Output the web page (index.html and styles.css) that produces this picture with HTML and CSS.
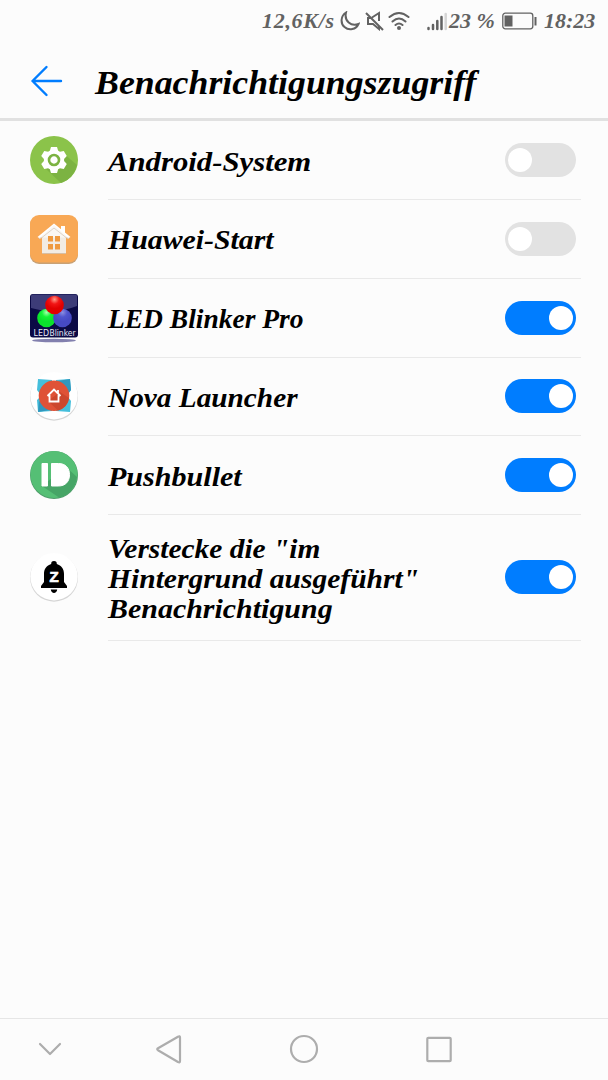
FILE: index.html
```html
<!DOCTYPE html>
<html lang="de">
<head>
  <meta charset="UTF-8" />
  <meta name="viewport" content="width=device-width, initial-scale=1.0" />
  <title>Benachrichtigungszugriff</title>
  <link rel="stylesheet" href="styles.css">
</head>
<body>
  <div class="screen">
    <div class="status-bar">
      <span class="speed">12,6K/s</span>
      <svg class="moon" width="20" height="20" viewBox="0 0 20 20"><path d="M6 1.500C.5 5 .3 12.500 4.500 16C9 20 16 18.500 18.500 13C11 16 4 10 6 1.500Z"/></svg>
      <svg class="mute" width="20" height="20" viewBox="0 0 20 20"><path d="M1 2L18 19M7 6.500L14 2V10M14 15V18L8 13H3V7H6"/></svg>
      <svg class="wifi" width="24" height="20" viewBox="0 0 24 20"><path d="M2.500 6Q12-2 21.500 6M5.500 10.500Q12 4.500 18.500 10.500M8.500 14Q12 11 15.500 14"/><circle cx="12" cy="17" r="2"/></svg>
      <svg class="signal" width="20" height="20" viewBox="0 0 20 20"><path d="M1.500 17V18M6 14V18M10.300 10V18M14.500 6V18"/><path class="weak" d="M18.700 3V18"/></svg>
      <span class="percent">23 %</span>
      <svg class="battery" width="36" height="18" viewBox="0 0 36 18"><rect x=".8" y="1.200" width="30" height="15.600" rx="2.500"/><path class="level" d="M2.500 3.500H10.500V14.500H2.500ZM32.500 5H34.500V13.500H32.500Z"/></svg>
      <span class="time">18:23</span>
    </div>

    <div class="header">
      <svg class="back" width="34" height="34" viewBox="0 0 34 34"><path d="M17.500 3L3.500 17L17.500 31M3.500 17H32"/></svg>
      <h1>Benachrichtigungszugriff</h1>
    </div>

    <div class="list">
      <div class="row">
        <svg class="icon" viewBox="0 0 48 48">
          <circle cx="24" cy="24" r="24" fill="#8bc34a"/>
          <path d="M33 17L47 29A24 24 0 0 1 31 47L16 33Z" fill="#7cb342"/>
          <g transform="translate(24 24)" fill="#fff">
            <circle r="10.200"/>
            <path id="tooth" d="M-4.500-8L-3-13H3L4.500-8V8L3 13H-3L-4.500 8Z"/>
            <use href="#tooth" transform="rotate(60)"/>
            <use href="#tooth" transform="rotate(120)"/>
            <circle r="5" fill="#fff" stroke="#7cb342" stroke-width="2.600"/>
          </g>
        </svg>
        <div class="body">
          <span class="label android">Android-System</span>
          <span class="switch"></span>
        </div>
      </div>

      <div class="row">
        <svg class="icon" viewBox="0 0 48 48">
          <rect y="1" width="48" height="48" rx="9" fill="#c9a174"/>
          <rect width="48" height="47.500" rx="9" fill="#f8a855"/>
          <path d="M12 23V39H36V23L24 11Z" fill="#f2ece4"/>
          <path d="M31 16V11H35V20M7.500 22L24 8.500L40.500 22L38 23.500L24 12.500L10 23.500Z" fill="#fff"/>
          <path d="M24 10L38 22.500H10Z" fill="#faf7f3"/>
          <path d="M9 23.500L12 22.500L24 13L36 22.500L39 23.500" fill="none" stroke="#ddd3c8"/>
          <path d="M18 21H23V26.500H18ZM25 21H30V26.500H25ZM18 29H23V34.500H18ZM25 29H30V34.500H25Z" fill="#ef9a40"/>
          <path d="M12 38.500H36" stroke="#d7bea3"/>
        </svg>
        <div class="body">
          <span class="label huawei">Huawei-Start</span>
          <span class="switch"></span>
        </div>
      </div>

      <div class="row">
        <svg class="icon" viewBox="0 0 48 48">
          <defs>
            <radialGradient id="red" cy=".2"><stop offset="0" stop-color="#ff9b8a"/><stop offset=".5" stop-color="#f21515"/><stop offset="1" stop-color="#e00000"/></radialGradient>
            <radialGradient id="green" cy=".2"><stop offset="0" stop-color="#a5ffad"/><stop offset=".5" stop-color="#12f535"/><stop offset="1" stop-color="#0be02c"/></radialGradient>
            <radialGradient id="blue" cy=".2"><stop offset="0" stop-color="#8c8fe0"/><stop offset=".5" stop-color="#5055cf"/><stop offset="1" stop-color="#464ac4"/></radialGradient>
          </defs>
          <rect width="48" height="43.500" rx="3" fill="#0b0a45"/>
          <path d="M1 2Q1 .5 3 .5H45Q47 .5 47 2V12Q24 21 1 14Z" fill="#3d3c78"/>
          <circle cx="16.500" cy="24" r="9.300" fill="url(#green)"/>
          <circle cx="32.500" cy="24" r="9.300" fill="url(#blue)"/>
          <circle cx="24.500" cy="11" r="9.300" fill="url(#red)"/>
          <text class="led" x="3.500" y="41.500" textLength="15.500" lengthAdjust="spacingAndGlyphs" font-weight="bold">LED</text>
          <text class="led" x="19.500" y="41.500" textLength="26" lengthAdjust="spacingAndGlyphs">Blinker</text>
          <ellipse cx="24" cy="46.500" rx="22" ry="1.800" fill="#8280ae"/>
        </svg>
        <div class="body">
          <span class="label blinker">LED Blinker Pro</span>
          <span class="switch on"></span>
        </div>
      </div>

      <div class="row">
        <svg class="icon" viewBox="0 0 48 48">
          <circle cx="24" cy="24.700" r="24" fill="#d5d5d5"/>
          <circle cx="24" cy="23.700" r="23.700" fill="#fff"/>
          <path d="M8 7L22 8V22H10L7 18ZM40 7L41 18L38 22H26V8ZM8 40L7 28L10 25H22V39ZM40 40L26 39V25H38L41 29Z" fill="#45bfdc"/>
          <path d="M28 9L40 7L41 18L38 22ZM8 40L9 29L20 38Z" fill="#3197bd"/>
          <circle cx="24" cy="23.700" r="15.300" fill="#df5237"/>
          <path d="M30 20L39 26A15.300 15.300 0 0 1 28 38.500L18 29Z" fill="#cc472e"/>
          <path d="M17.500 24L24 17.500L30.500 24M19.500 23V29.500H28.500V23M28 21V18" fill="none" stroke="#fff" stroke-width="1.800"/>
        </svg>
        <div class="body">
          <span class="label nova">Nova Launcher</span>
          <span class="switch on"></span>
        </div>
      </div>

      <div class="row">
        <svg class="icon" viewBox="0 0 48 48">
          <circle cx="24" cy="24" r="24" fill="#4e9c6a"/>
          <circle cx="24" cy="23.500" r="23.500" fill="#55bf75"/>
          <path d="M36 16L47 26A23.500 23.500 0 0 1 29 46.500L12 35Z" fill="#46a566"/>
          <path d="M12 12.500H17.500V35H12ZM21.500 12.500H28.500C35.500 12.500 39.500 17 39.500 23.700S35.500 35 28.500 35H21.500Z" fill="#fff" stroke="#fff" stroke-width="1" stroke-linejoin="round"/>
        </svg>
        <div class="body">
          <span class="label push">Pushbullet</span>
          <span class="switch on"></span>
        </div>
      </div>

      <div class="row tall">
        <svg class="icon" viewBox="0 0 48 48">
          <circle cx="24" cy="24.700" r="24" fill="#d5d5d5"/>
          <circle cx="24" cy="23.700" r="23.700" fill="#fff"/>
          <path d="M24 8A2.800 2.800 0 0 1 26.800 11C31.500 12.500 34 16 34 21V29L37 33V35H11V33L14 29V21C14 16 16.500 12.500 21.200 11A2.800 2.800 0 0 1 24 8ZM20.800 36.500H27.200C26.800 41 21.200 41 20.800 36.500Z"/>
          <text class="zed" x="24" y="28.500" text-anchor="middle">Z</text>
        </svg>
        <div class="body">
          <div class="label-lines">
            <span class="label line1">Verstecke die "im</span>
            <span class="label line2">Hintergrund ausgeführt"</span>
            <span class="label line3">Benachrichtigung</span>
          </div>
          <span class="switch on"></span>
        </div>
      </div>
    </div>

    <div class="nav-bar">
      <svg class="hide" width="24" height="30" viewBox="0 0 24 30"><path d="M2 10L12 20L22 10"/></svg>
      <svg width="28" height="30" viewBox="0 0 28 30"><path d="M3 14.300Q1.500 15.200 3 16.200L23 28Q25 29 25 27V3.500Q25 1.500 23 2.700Z"/></svg>
      <svg width="30" height="30" viewBox="0 0 30 30"><circle cx="15" cy="15" r="13"/></svg>
      <svg width="28" height="30" viewBox="0 0 28 30"><rect x="2.300" y="3.800" width="23.400" height="23.400" rx="1"/></svg>
    </div>
  </div>
</body>
</html>
```
FILE: styles.css
```css
* {
  box-sizing: border-box;
}

body {
  margin: 0;
  background-color: #fcfcfc;
  color: #000;
  font-family: "Liberation Serif", "Times New Roman", serif;
  font-style: italic;
  font-weight: bold;
}

.screen {
  height: 1080px;
  display: flex;
  flex-direction: column;
}

.status-bar {
  height: 42px;
  padding: 0 12px 0 262px;
  display: flex;
  align-items: center;
  color: #626262;
  font-size: 22px;
  line-height: 42px;
  white-space: nowrap;
}

.status-bar span {
  flex: none;
}

.status-bar svg {
  flex: none;
  fill: none;
  stroke: #626262;
  stroke-width: 2;
}

.speed {
  width: 78px;
  letter-spacing: 0.700px;
}

.mute {
  margin-left: 5px;
}

.wifi {
  margin-left: 2px;
  stroke-linecap: round;
}

.wifi circle {
  fill: #626262;
  stroke: none;
}

.status-bar .signal {
  margin-left: 16px;
  stroke-width: 2.500;
  stroke-linecap: round;
}

.status-bar .weak {
  stroke: #d5d5d5;
}

.percent {
  width: 53px;
  margin-left: 2px;
}

.status-bar .battery {
  stroke-width: 1.300;
}

.battery .level {
  fill: #626262;
  stroke: none;
}

.time {
  margin-left: 6px;
}

.header {
  height: 79.250px;
  padding: 2px 0 0 29px;
  display: flex;
  align-items: center;
  border-bottom: 3px solid #e1e1e1;
}

.back {
  fill: none;
  stroke: #007dff;
  stroke-width: 2.400;
  stroke-linecap: round;
  stroke-linejoin: round;
}

h1 {
  margin: 3px 0 0 32px;
  font-size: 33px;
  line-height: 40px;
  transform: scaleX(1.085);
  transform-origin: left;
}

.row {
  height: 78.750px;
  padding: 0 27px 0 30px;
  display: flex;
  align-items: center;
  gap: 30px;
}

.row.tall {
  height: 125.500px;
}

.icon {
  width: 48px;
  height: 48px;
  margin-bottom: 1px;
  flex: none;
  overflow: visible;
}

.led {
  fill: #e8e8f4;
  font-family: "DejaVu Sans", sans-serif;
  font-size: 8.500px;
  font-style: normal;
  font-weight: normal;
}

.zed {
  fill: #fff;
  stroke: #fff;
  stroke-width: 0.700;
  font: bold 15px "Liberation Sans", sans-serif;
}

.body {
  flex: 1;
  height: 100%;
  padding-right: 5px;
  display: flex;
  align-items: center;
  justify-content: space-between;
  border-bottom: 1.500px solid #e9e9e9;
}

.label {
  padding-top: 3px;
  font-size: 26.500px;
  line-height: 30px;
  transform-origin: left;
}

.label-lines {
  padding-top: 3px;
  display: flex;
  flex-direction: column;
  align-items: flex-start;
}

.label-lines .label {
  padding-top: 0;
}

/* wide letterforms */
.android {
  transform: scaleX(1.160);
}

.huawei {
  transform: scaleX(1.125);
}

.blinker {
  transform: scaleX(1.037);
}

.nova {
  transform: scaleX(1.105);
}

.push {
  transform: scaleX(1.135);
}

.line1 {
  transform: scaleX(1.110);
}

.line2 {
  transform: scaleX(1.115);
}

.line3 {
  transform: scaleX(1.130);
}

.switch {
  width: 71px;
  height: 34px;
  padding: 0 3px;
  display: flex;
  align-items: center;
  border-radius: 17px;
  background-color: #e2e2e2;
}

.switch::before {
  content: "";
  width: 24px;
  height: 24px;
  border-radius: 50%;
  background-color: #fff;
}

.switch.on {
  justify-content: flex-end;
  background-color: #007dff;
}

.nav-bar {
  height: 62px;
  margin-top: auto;
  padding: 0 0 2px 38px;
  display: flex;
  align-items: center;
  border-top: 1.500px solid #e6e6e6;
}

.nav-bar svg {
  margin-right: 106px;
  fill: none;
  stroke: #adadad;
  stroke-width: 2.200;
  stroke-linecap: round;
  stroke-linejoin: round;
}

.nav-bar .hide {
  margin-right: 93px;
}
```
